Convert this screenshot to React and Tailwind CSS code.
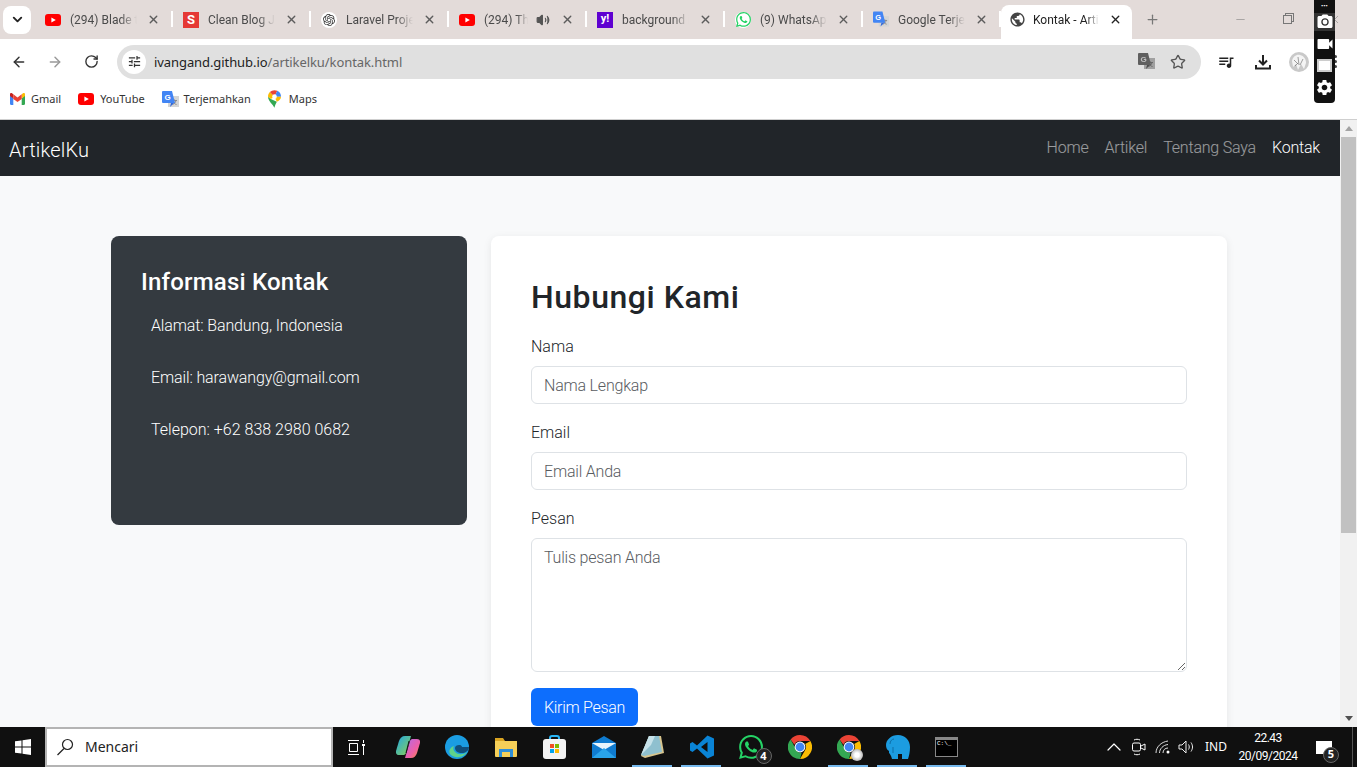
import React from "react";
import { ArrowLeft, ArrowRight, RotateCw, Star, Plus, X, Minus, ChevronDown, ChevronUp, Volume2 } from "lucide-react";
import { MdPublic, MdQueueMusic, MdPhotoCamera, MdVideocam, MdSettings, MdOutlineTune } from "react-icons/md";
import { SiOpenai, SiWhatsapp } from "react-icons/si";

function YouTubeIcon() {
  return (
    <svg width="16" height="12" viewBox="0 0 16 12">
      <rect width="16" height="12" rx="3" fill="#f00" />
      <path d="M6.4 3.4 10.8 6 6.4 8.6z" fill="#fff" />
    </svg>
  );
}

function ChromeIcon({ size = 24 }) {
  return (
    <svg width={size} height={size} viewBox="0 0 24 24">
      <path d="M12 0a12 12 0 0 1 10.400 6H12a6 6 0 0 0-5.600 3.700L2.600 4.400A12 12 0 0 1 12 0z" fill="#ea4335" />
      <path d="M22.400 6A12 12 0 0 1 12 24l4.900-8.500A6 6 0 0 0 17.200 9z" fill="#fbbc04" />
      <path d="M12 24A12 12 0 0 1 2.600 4.400l5 9a6 6 0 0 0 6 4.400z" fill="#34a853" />
      <circle cx="12" cy="12" r="5.400" fill="#fff" />
      <circle cx="12" cy="12" r="4.400" fill="#4285f4" />
    </svg>
  );
}

function TranslateIcon({ className }) {
  return (
    <svg width="17" height="17" viewBox="0 0 17 17" className={className}>
      <rect x="6" y="5" width="11" height="11" fill="#d5d5d5" />
      <path d="M10 9.500h5M12.500 8.500v1M14 9.500c-.5 2-2 3.500-3.500 4M11 10.500c.7 1.500 2 2.700 3.500 3" stroke="#8a8a8a" fill="none" />
      <path d="M1 0h9l3 12H1a1 1 0 0 1-1-1V1a1 1 0 0 1 1-1z" fill="#4285f4" />
      <path d="M9 12l-1 4 4-4z" fill="#3367d6" />
      <text x="2.500" y="9" fontSize="8" fontWeight="700" fill="#fff" fontFamily="Liberation Sans">G</text>
    </svg>
  );
}

function GmailIcon() {
  return (
    <svg width="15" height="12" viewBox="0 0 15 12">
      <path d="M0 1.500v9.300c0 .6.500 1.200 1 1.200h2.300V5.500z" fill="#4285f4" />
      <path d="M15 1.500v9.300c0 .6-.5 1.200-1 1.200h-2.300V5.500z" fill="#34a853" />
      <path d="M3.300 5.500 0 3V1.300C0 .2 1.200-.4 2 .3l1.300 1z" fill="#c5221f" />
      <path d="M11.700 5.500 15 3V1.300c0-1.100-1.200-1.700-2-1l-1.300 1z" fill="#fbbc04" />
      <path d="M3.300 6V1.300L7.500 4.500l4.200-3.200V6L7.500 9z" fill="#ea4335" />
    </svg>
  );
}

function MapsIcon() {
  return (
    <svg width="13" height="18" viewBox="0 0 14 19">
      <path d="M7 19C5.500 15.500 0 11.500 0 7L3 9.500 9.500 12.500C8.500 14.500 7.500 16.500 7 19z" fill="#34a853" />
      <path d="M0 7c0-2 .8-3.700 2-5l5 5-4 2.500z" fill="#fbbc04" />
      <path d="M2 2a7 7 0 0 1 5-2c1 0 2 .2 3 .7L7 7z" fill="#ea4335" />
      <path d="M10 .7A7 7 0 0 1 14 7l-7 0z" fill="#4285f4" />
      <path d="M14 7c0 2.200-1.500 4-4.500 5.500L7 7z" fill="#fbbc04" />
      <circle cx="7" cy="7" r="2.500" fill="#fff" />
    </svg>
  );
}

const tabs = [
  { title: "(294) Blade tutorial", icon: <YouTubeIcon /> },
  { title: "Clean Blog Jekyll", icon: <span className="flex h-4 w-4 items-center justify-center bg-[#e53935] text-[13px] font-bold text-white">S</span> },
  { title: "Laravel Project", icon: <span className="flex h-4 w-4 items-center justify-center rounded-full bg-white text-[12px] text-[#333]"><SiOpenai /></span> },
  { title: "(294) The", icon: <YouTubeIcon />, sound: true },
  { title: "background image", icon: <span className="flex h-4 w-4 items-center justify-center bg-[#5f01d1] text-[11px] font-bold text-white">y!</span> },
  { title: "(9) WhatsApp", icon: <span className="flex h-4 w-4 items-center justify-center rounded-full bg-white text-[15px] text-[#25d366]"><SiWhatsapp /></span> },
  { title: "Google Terjemahan", icon: <TranslateIcon /> },
];

function Tab({ tab }) {
  return (
    <div className="relative flex h-full w-[138px] shrink-0 items-center pl-[10px]">
      <span className="flex w-4 shrink-0 items-center justify-center">{tab.icon}</span>
      <span className={`ml-[9px] overflow-hidden whitespace-nowrap text-[#4a4a4a] [mask-image:linear-gradient(to_right,black_75%,transparent)] ${tab.sound ? "w-[44px]" : "w-[67px]"}`}>
        {tab.title}
      </span>
      {tab.sound && <Volume2 size={14} className="ml-[8px] text-[#555]" fill="#555" />}
      <X size={13} strokeWidth={2.5} className={`text-[#5c5c5c] ${tab.sound ? "ml-[11px]" : "ml-[10px]"}`} />
      <span className="absolute right-0 top-[11px] h-[16px] w-[2px] bg-white" />
    </div>
  );
}

function BrowserChrome() {
  return (
    <div className="shrink-0 text-xs text-[#333]">
      <div className="flex h-[39px] items-center bg-[#e3dbd9] pl-[3px] font-['Roboto',sans-serif]">
        <div className="flex h-7 w-7 shrink-0 items-center justify-center rounded-lg bg-white">
          <ChevronDown size={15} strokeWidth={3} className="text-[#222]" />
        </div>
        <div className="ml-[4px] flex h-full">
          {tabs.map((tab) => (
            <Tab key={tab.title} tab={tab} />
          ))}
        </div>
        <div className="flex h-[34px] w-[131px] shrink-0 items-center self-end rounded-t-lg bg-white pb-[5px] pl-2">
          <MdPublic className="shrink-0 text-[17px] text-[#444]" />
          <span className="ml-[7px] w-[66px] overflow-hidden whitespace-nowrap text-[#222] [mask-image:linear-gradient(to_right,black_80%,transparent)]">Kontak - Artikel</span>
          <X size={13} strokeWidth={2.5} className="ml-[10px] text-[#222]" />
        </div>
        <Plus size={15} className="ml-[13px] text-[#777]" />
        <div className="ml-auto mr-[16px] flex items-center text-[#777]">
          <Minus size={13} strokeWidth={1} />
          <span className="relative ml-[36px] block h-[9px] w-[9px] border border-[#777] shadow-[2px_-2px_0_-1px_#e3dbd9,2px_-2px_0_0_#777]" />
          <X size={13} strokeWidth={1} className="ml-[36px]" />
        </div>
      </div>

      <div className="flex h-[45px] items-center bg-white pl-[11px]">
        <ArrowLeft size={16} strokeWidth={2.2} className="text-[#333]" />
        <ArrowRight size={16} strokeWidth={2.2} className="ml-5 text-[#999]" />
        <RotateCw size={15} strokeWidth={2.2} className="ml-[21px] text-[#333]" />
        <div className="ml-[18px] flex h-[34px] w-[1084px] items-center rounded-full bg-[#e0e0e0] pl-[5px] pr-[15px]">
          <span className="flex h-6 w-6 items-center justify-center rounded-full bg-white">
            <MdOutlineTune className="text-[15px] text-[#333]" />
          </span>
          <span className="ml-2 pt-[2px] text-[13px] tracking-[-0.08px] text-[#222]">
            ivangand.github.io<span className="text-[#666]">/artikelku/kontak.html</span>
          </span>
          <span className="ml-auto flex items-center gap-[15px]">
            <TranslateIcon className="brightness-75 grayscale" />
            <Star size={16} strokeWidth={2} className="text-[#555]" />
          </span>
        </div>
        <MdQueueMusic className="ml-[16px] text-[18px] text-[#222]" />
        <svg width="18" height="18" viewBox="0 0 18 18" className="ml-[19px]">
          <path d="M9 2v9M5 7.500l4 4 4-4M2 12v3.500h14V12" fill="none" stroke="#222" strokeWidth="2" />
        </svg>
        <svg width="20" height="20" viewBox="0 0 20 20" className="ml-[17px]">
          <circle cx="10" cy="10" r="10" fill="#c9c9c9" />
          <path d="M3 9c1-5 5-7 8-6 4 1 6 4 6 8l-2 6-3-5-3 6-2-6-3 3z" fill="#f4f4f4" />
          <path d="M5 8l4 4M9 5l1 8M14 7l-3 6M6 14l3-3" stroke="#777" strokeWidth=".7" />
        </svg>
        <span className="ml-[25px] flex flex-col gap-[2px]">
          <span className="h-[3px] w-[3px] rounded-full bg-[#444]" />
          <span className="h-[3px] w-[3px] rounded-full bg-[#444]" />
          <span className="h-[3px] w-[3px] rounded-full bg-[#444]" />
        </span>
      </div>

      <div className="flex h-[36px] items-center border-b border-[#cfcfcf] bg-white pb-[5px] pl-[10px] text-[11px] text-[#333]">
        <GmailIcon />
        <span className="ml-[6px]">Gmail</span>
        <span className="ml-[17px]"><YouTubeIcon /></span>
        <span className="ml-[6px]">YouTube</span>
        <span className="ml-[17px]"><TranslateIcon /></span>
        <span className="ml-[5px]">Terjemahkan</span>
        <span className="ml-[17px]"><MapsIcon /></span>
        <span className="ml-[8px]">Maps</span>
      </div>
    </div>
  );
}

function CaptureOverlay() {
  return (
    <div className="absolute left-[1314px] top-0 flex h-[103px] w-[21px] flex-col items-center rounded-b bg-[#111] text-white">
      <span className="mt-[3px] h-[7px] text-[6px] leading-[7px]">•••</span>
      <span className="mt-[3px] flex h-[18px] w-full items-center justify-center bg-[#333]">
        <MdPhotoCamera className="text-[18px]" />
      </span>
      <MdVideocam className="mt-[3px] text-[20px]" />
      <span className="mt-[5px] h-[13px] w-[15px] border-2 border-[#ccc] bg-white" />
      <MdSettings className="mt-[6px] text-[19px]" />
    </div>
  );
}

function Field({ label, placeholder }) {
  return (
    <div className="mb-4">
      <label className="mb-2 block h-6 pt-px leading-6">{label}</label>
      <input
        type="text"
        placeholder={placeholder}
        className="block h-[38px] w-full rounded-md border border-[#dee2e6] bg-white px-3 tracking-[-0.2px] placeholder-[#595c5f]"
      />
    </div>
  );
}

function ContactPage() {
  return (
    <div className="flex min-h-0 flex-1">
      <div className="flex min-w-0 flex-1 flex-col bg-[#f8f9fa] font-['Roboto',sans-serif] font-light text-[#212529]">
        <nav className="flex h-14 shrink-0 items-center justify-between bg-[#212529] pl-[9px] pr-5">
          <a className="pt-[3px] text-xl tracking-[0.2px] text-white">ArtikelKu</a>
          <div className="flex gap-4 tracking-[-0.2px] text-white/55">
            <a>Home</a>
            <a>Artikel</a>
            <a>Tentang Saya</a>
            <a className="text-white">Kontak</a>
          </div>
        </nav>
        <div className="flex min-h-0 flex-1 items-start gap-6 overflow-hidden pl-[111px] pt-[60px]">
          <aside className="h-[289px] w-[356px] shrink-0 rounded-lg bg-[#343a40] p-[30px] pt-[31px] text-white">
            <h3 className="mb-[17px] text-2xl font-medium leading-[30px] tracking-[0.2px]">Informasi Kontak</h3>
            <ul className="flex flex-col gap-7 pl-[10px]">
              <li className="leading-6 tracking-[-0.13px]">Alamat: Bandung, Indonesia</li>
              <li className="leading-6 tracking-[-0.13px]">Email: harawangy@gmail.com</li>
              <li className="leading-6">Telepon: +62 838 2980 0682</li>
            </ul>
          </aside>
          <main className="w-[736px] shrink-0 rounded-lg bg-white p-10 pb-12 shadow-[0_2px_8px_rgba(0,0,0,0.08)]">
            <h2 className="mb-4 text-[32px] font-medium leading-[42px] tracking-[0.55px]">Hubungi Kami</h2>
            <form>
              <Field label="Nama" placeholder="Nama Lengkap" />
              <Field label="Email" placeholder="Email Anda" />
              <div className="mb-4">
                <label className="mb-2 block h-6 pt-px leading-6">Pesan</label>
                <textarea
                  placeholder="Tulis pesan Anda"
                  className="block h-[134px] w-full rounded-md border border-[#dee2e6] bg-white px-3 py-[7px] tracking-[-0.2px] placeholder-[#595c5f]"
                />
              </div>
              <button type="button" className="h-[38px] w-[107px] rounded-md bg-[#0d6efd] pt-px tracking-[-0.3px] text-white">
                Kirim Pesan
              </button>
            </form>
          </main>
        </div>
      </div>
      <div className="flex w-[17px] shrink-0 flex-col items-center bg-[#f1f1f1]">
        <span className="mt-[6px] h-0 w-0 border-x-[4px] border-b-[5px] border-x-transparent border-b-[#a3a3a3]" />
        <span className="mt-[6px] h-[396px] w-[15px] bg-[#c1c1c1]" />
        <span className="mb-[6px] mt-auto h-0 w-0 border-x-[4px] border-t-[5px] border-x-transparent border-t-[#505050]" />
      </div>
    </div>
  );
}

function TaskIcon({ children, active }) {
  return (
    <div className="relative flex h-full w-[49px] items-center justify-center">
      {children}
      {active && <span className="absolute bottom-0 left-[4px] h-[2px] w-10 bg-[#76b9ed]" />}
    </div>
  );
}

function Taskbar() {
  return (
    <div className="flex h-10 shrink-0 items-center bg-[#101010] text-white">
      <div className="flex h-full w-[45px] items-center justify-center">
        <svg width="16" height="16" viewBox="0 0 16 16" fill="#fff">
          <path d="M0 2.300 6.500 1.400V7.500H0zM7.500 1.200 16 0V7.500H7.500zM0 8.500H6.500V14.600L0 13.700zM7.500 8.500H16V16L7.500 14.800z" />
        </svg>
      </div>
      <div className="flex h-full w-[288px] items-center border-2 border-[#b4b4b4] bg-white pl-[9px] text-sm text-[#222]">
        <svg width="18" height="18" viewBox="0 0 18 18" fill="none" stroke="#222" strokeWidth="1.200">
          <circle cx="11.500" cy="6.500" r="5" />
          <path d="M8 10.500 1.500 17" />
        </svg>
        <span className="ml-[11px]">Mencari</span>
      </div>
      <div className="flex h-full w-[46px] items-center justify-center">
        <svg width="17" height="15" viewBox="0 0 17 15" fill="none" stroke="#fff">
          <path d="M0 .5h11M0 14.500h11M1.500 3.500h8v8h-8zM15.500 0v3M15.500 6v9" />
          <rect x="14" y="4" width="3" height="2" fill="#fff" stroke="none" />
        </svg>
      </div>
      <div className="ml-1 flex h-full">
        <TaskIcon>
          <svg width="24" height="22" viewBox="0 0 24 22">
            <defs>
              <linearGradient id="copilotA" x1="0" y1="0" x2="1" y2="1">
                <stop offset="0" stopColor="#1fa7e8" />
                <stop offset="1" stopColor="#8ed14f" />
              </linearGradient>
              <linearGradient id="copilotB" x1="0" y1="0" x2="1" y2="1">
                <stop offset="0" stopColor="#b26ae8" />
                <stop offset=".6" stopColor="#ee5fa7" />
                <stop offset="1" stopColor="#f78b3e" />
              </linearGradient>
            </defs>
            <path d="M9 0h6l-5 17c-.5 1.500-1.500 2-3 2H3c-2.500 0-3.500-2-3-4L3 5c1-3 3-5 6-5z" fill="url(#copilotA)" />
            <path d="M15 22H9l5-17c.5-1.500 1.500-2 3-2h4c2.500 0 3.500 2 3 4l-3 10c-1 3-3 5-6 5z" fill="url(#copilotB)" />
            <path d="M13.500 5h-1l-3 12h1z" fill="#111" />
          </svg>
        </TaskIcon>
        <TaskIcon>
          <svg width="24" height="24" viewBox="0 0 24 24">
            <circle cx="12" cy="12" r="12" fill="#1b9de2" />
            <path d="M24 12c0 4-4 6-7 6-4 0-7-2-7-5 0-2 2-3 4-3 3 0 3 2 3 2h7z" fill="#104f7c" />
            <path d="M5 19c3 4 13 5 17-2-4 3-9 3-12 0-2-2-2-4-1-6-3 1-6 4-4 8z" fill="#5fd38a" />
          </svg>
        </TaskIcon>
        <TaskIcon>
          <svg width="22" height="20" viewBox="0 0 22 20">
            <path d="M0 1h8l2 3h-10z" fill="#d9a422" />
            <path d="M0 4h22v15a1 1 0 0 1-1 1H1a1 1 0 0 1-1-1z" fill="#f5cf58" />
            <path d="M4 12h14v8h-3v-5H7v5H4z" fill="#2f8fd8" />
          </svg>
        </TaskIcon>
        <TaskIcon>
          <svg width="23" height="24" viewBox="0 0 23 24">
            <path d="M7 5V3a2 2 0 0 1 2-2h5a2 2 0 0 1 2 2v2" fill="none" stroke="#29b6f6" strokeWidth="2" />
            <rect y="4" width="23" height="20" rx="3" fill="#f3f3f3" />
            <rect x="7" y="9" width="4" height="4" fill="#f25022" />
            <rect x="12" y="9" width="4" height="4" fill="#7fba00" />
            <rect x="7" y="14" width="4" height="4" fill="#00a4ef" />
            <rect x="12" y="14" width="4" height="4" fill="#ffb900" />
          </svg>
        </TaskIcon>
        <TaskIcon>
          <svg width="24" height="22" viewBox="0 0 24 22">
            <path d="M0 7 12 0l12 7v15H0z" fill="#0f7bd0" />
            <path d="M0 7h24L12 14z" fill="#e8f4fc" />
            <path d="M0 22 12 12l12 10z" fill="#29a3ea" />
          </svg>
        </TaskIcon>
        <TaskIcon active>
          <svg width="23" height="24" viewBox="0 0 23 24">
            <path d="M8 1h12l3 17-19 5 -4-2z" fill="#d8c58e" />
            <path d="M8 1h10l3 16-18 4-3-1z" fill="#8fc0cf" />
            <path d="M8 1h6l-4 9-10 10z" fill="#c7e2ea" />
          </svg>
        </TaskIcon>
        <TaskIcon active>
          <svg width="24" height="24" viewBox="0 0 24 24">
            <path d="M17.500.5 24 3.500v17l-6.500 3L7 13.500 2.500 17 0 15.500V8.500L2.500 7 7 10.500zM17.500 7 11 12l6.500 5z" fill="#0a84d6" />
          </svg>
        </TaskIcon>
        <TaskIcon>
          <span className="relative block">
            <SiWhatsapp className="text-[24px] text-[#25d366]" />
            <span className="absolute -bottom-[5px] -right-[9px] flex h-[16px] w-[16px] items-center justify-center rounded-full border border-[#666] bg-[#222] text-[11px] font-bold">4</span>
          </span>
        </TaskIcon>
        <TaskIcon>
          <ChromeIcon />
        </TaskIcon>
        <TaskIcon active>
          <span className="relative block">
            <ChromeIcon />
            <span className="absolute -bottom-[2px] -right-[2px] h-3 w-3 rounded-full bg-[radial-gradient(circle,#fff_25%,#999_90%)]" />
          </span>
        </TaskIcon>
        <TaskIcon active>
          <svg width="24" height="24" viewBox="0 0 24 24">
            <path d="M12 0c7 0 12 5 12 12 0 5-1 9-2 12h-6v-5h-4v5H6c-1-4-2-5-3-6v-2c-2-1-3-3-3-6C0 5 5 0 12 0z" fill="#1c9ce0" />
            <path d="M4 9c0-3 2-5 4-5M7 12v6" fill="none" stroke="#0d6ea8" />
          </svg>
        </TaskIcon>
        <TaskIcon active>
          <span className="block h-[20px] w-[23px] border border-[#888] border-t-[3px] bg-black pl-[1px] font-['Liberation_Mono',monospace] text-[6px] leading-[8px] text-white">C:\_</span>
        </TaskIcon>
      </div>
      <div className="ml-auto flex h-full items-center text-xs">
        <ChevronUp size={24} strokeWidth={1.2} />
        <svg width="14" height="18" viewBox="0 0 14 18" fill="none" stroke="#fff" className="ml-[6px]">
          <rect x=".5" y="5" width="8" height="8" rx="1.500" />
          <path d="M9 8l4-2v6l-4-2M2 2c2-1 4-1 6 0M2 16c2 1 4 1 6 0" />
        </svg>
        <svg width="16" height="14" viewBox="0 0 16 14" fill="none" stroke="#ddd" className="ml-[9px]">
          <path d="M1 13C1 7 6 2 13 1M4.500 13C4.500 9 8 5 13 4.500M8 13c0-3 2-5 5-5" />
          <circle cx="13" cy="12" r="1.500" fill="#fff" stroke="none" />
        </svg>
        <svg width="16" height="14" viewBox="0 0 16 14" fill="none" stroke="#eee" className="ml-[7px]">
          <path d="M1 5h3l4-4v12L4 9H1zM10.500 4.500c1 1.500 1 3.500 0 5M13 2.500c2 3 2 6 0 9" />
        </svg>
        <span className="ml-[10px] w-6 text-center">IND</span>
        <div className="ml-[7px] flex w-[66px] flex-col items-center font-['Roboto',sans-serif] text-xs leading-[18px] tracking-[-0.5px]">
          <span>22.43</span>
          <span>20/09/2024</span>
        </div>
        <div className="relative ml-[15px] h-[13px] w-[16px] bg-white">
          <span className="absolute -bottom-[9px] -right-[7px] flex h-4 w-4 items-center justify-center rounded-full border border-[#666] bg-[#222] text-[11px] font-bold">5</span>
        </div>
        <div className="ml-[20px] h-full w-px bg-[#555]" />
        <div className="w-1 self-stretch" />
      </div>
    </div>
  );
}

export default function App() {
  return (
    <div className="relative flex h-[767px] w-[1357px] flex-col overflow-hidden bg-white font-['Noto_Sans',sans-serif]">
      <BrowserChrome />
      <ContactPage />
      <Taskbar />
      <CaptureOverlay />
    </div>
  );
}
